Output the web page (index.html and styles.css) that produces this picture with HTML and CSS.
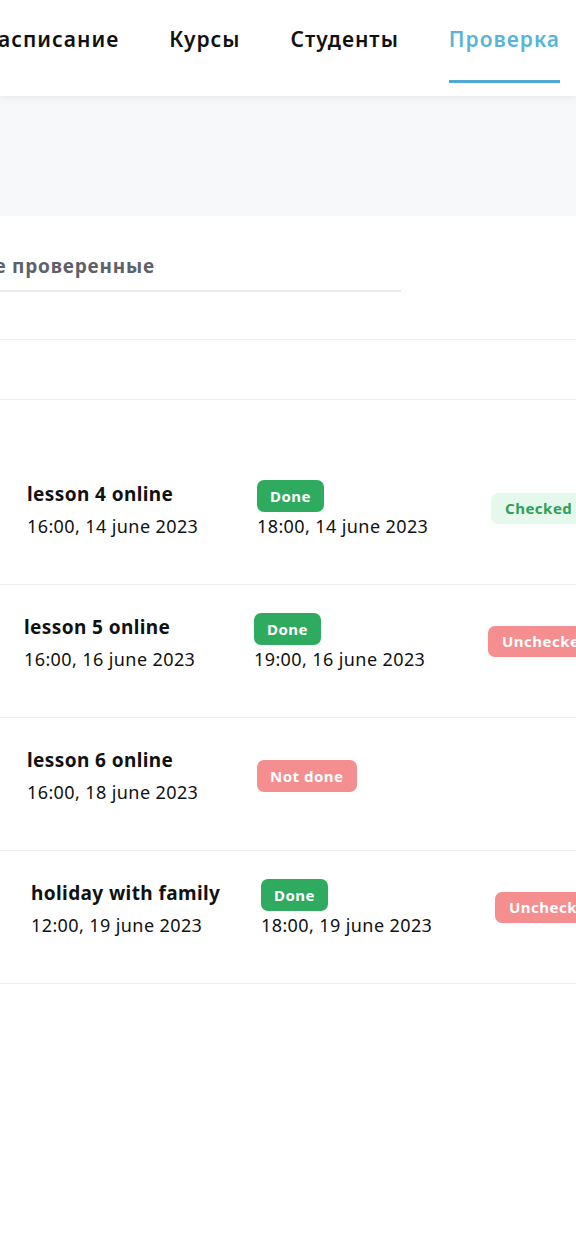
FILE: index.html
```html
<!DOCTYPE html>
<html lang="ru">
  <head>
    <meta charset="UTF-8" />
    <meta name="viewport" content="width=device-width, initial-scale=1.0" />
    <title>Проверка</title>
    <link rel="stylesheet" href="styles.css">
  </head>
  <body>
    <header class="topbar">
      <nav class="nav">
        <a class="nav-item" href="#">Расписание</a>
        <a class="nav-item" href="#">Курсы</a>
        <a class="nav-item" href="#">Студенты</a>
        <a class="nav-item active" href="#">Проверка</a>
      </nav>
    </header>

    <div class="band"></div>

    <main class="content">
      <div class="filter">
        <span class="filter-label">Не проверенные</span>
      </div>

      <div class="toolbar"></div>

      <ul class="list">
        <li class="row">
          <div class="col-title">
            <div class="title">lesson 4 online</div>
            <div class="date">16:00, 14 june 2023</div>
          </div>
          <div class="col-status">
            <span class="badge done">Done</span>
            <div class="date">18:00, 14 june 2023</div>
          </div>
          <div class="col-check">
            <span class="badge checked">Checked</span>
          </div>
        </li>
        <li class="row row-left">
          <div class="col-title">
            <div class="title">lesson 5 online</div>
            <div class="date">16:00, 16 june 2023</div>
          </div>
          <div class="col-status">
            <span class="badge done">Done</span>
            <div class="date">19:00, 16 june 2023</div>
          </div>
          <div class="col-check">
            <span class="badge unchecked">Unchecked</span>
          </div>
        </li>
        <li class="row">
          <div class="col-title">
            <div class="title">lesson 6 online</div>
            <div class="date">16:00, 18 june 2023</div>
          </div>
          <div class="col-status">
            <span class="badge not-done">Not done</span>
          </div>
          <div class="col-check"></div>
        </li>
        <li class="row row-right">
          <div class="col-title">
            <div class="title">holiday with family</div>
            <div class="date">12:00, 19 june 2023</div>
          </div>
          <div class="col-status">
            <span class="badge done">Done</span>
            <div class="date">18:00, 19 june 2023</div>
          </div>
          <div class="col-check">
            <span class="badge unchecked">Unchecked</span>
          </div>
        </li>
      </ul>
    </main>
  </body>
</html>
```

FILE: styles.css
```css
* {
  box-sizing: border-box;
}
body {
  font-family: "Noto Sans", "DejaVu Sans", sans-serif;
  background-color: #fff;
  color: #111;
  margin: 0;
  padding: 0;
  overflow: hidden;
}
.topbar {
  position: relative;
  z-index: 1;
  height: 96px;
  background-color: #fff;
  box-shadow: 0 2px 6px rgba(0, 0, 0, 0.06);
  overflow: hidden;
}
.nav {
  display: flex;
  justify-content: flex-end;
  gap: 50px;
  padding-right: 16px;
}
.nav-item {
  flex-shrink: 0;
  padding-top: 26px;
  padding-bottom: 28px;
  border-bottom: 3px solid transparent;
  font-size: 21px;
  line-height: 26px;
  font-weight: 600;
  letter-spacing: 1px;
  color: #111;
  text-decoration: none;
}
.nav-item.active {
  color: #5ab4d8;
  border-bottom-color: #4fa9d1;
}
.band {
  height: 120px;
  background-color: #f7f8fa;
}
.filter {
  width: 401px;
  padding-top: 38px;
  padding-bottom: 12px;
  border-bottom: 2px solid #ececec;
  overflow: hidden;
}
.filter-label {
  display: block;
  margin-left: -21px;
  font-size: 19px;
  line-height: 24px;
  font-weight: 700;
  letter-spacing: 0.8px;
  color: #5d6169;
}
.toolbar {
  height: 61px;
  margin-top: 47px;
  border-top: 1px solid #ececec;
  border-bottom: 1px solid #ececec;
}
.list {
  list-style: none;
  margin: 0;
  padding: 52px 0 0 0;
}
.row {
  display: flex;
  align-items: center;
  height: 133px;
  padding: 28px 0 44px 27px;
  border-bottom: 1px solid #ececec;
  white-space: nowrap;
}
.row-left {
  padding-left: 24px;
}
.row-right {
  padding-left: 31px;
}
.col-title {
  width: 230px;
  flex-shrink: 0;
}
.col-status {
  width: 234px;
  flex-shrink: 0;
  display: flex;
  flex-direction: column;
  align-items: flex-start;
}
.col-check {
  flex-shrink: 0;
  margin-top: -3px;
}
.title {
  font-size: 19px;
  line-height: 28px;
  font-weight: 700;
  letter-spacing: 0.4px;
  margin-bottom: 4px;
}
.date {
  font-size: 18px;
  line-height: 28px;
  letter-spacing: 0.4px;
}
.badge {
  display: inline-block;
  height: 32px;
  line-height: 32px;
  padding: 0 13px;
  border-radius: 7px;
  font-size: 15px;
  font-weight: 700;
  letter-spacing: 0.5px;
}
.done {
  background-color: #2eab5f;
  color: #fff;
}
.not-done,
.unchecked {
  background-color: #f58e8e;
  color: #fff;
}
.checked {
  background-color: #e4f8eb;
  color: #2f9f5a;
}
.unchecked,
.checked {
  padding: 0 14px;
  height: 31px;
  line-height: 31px;
}
```
